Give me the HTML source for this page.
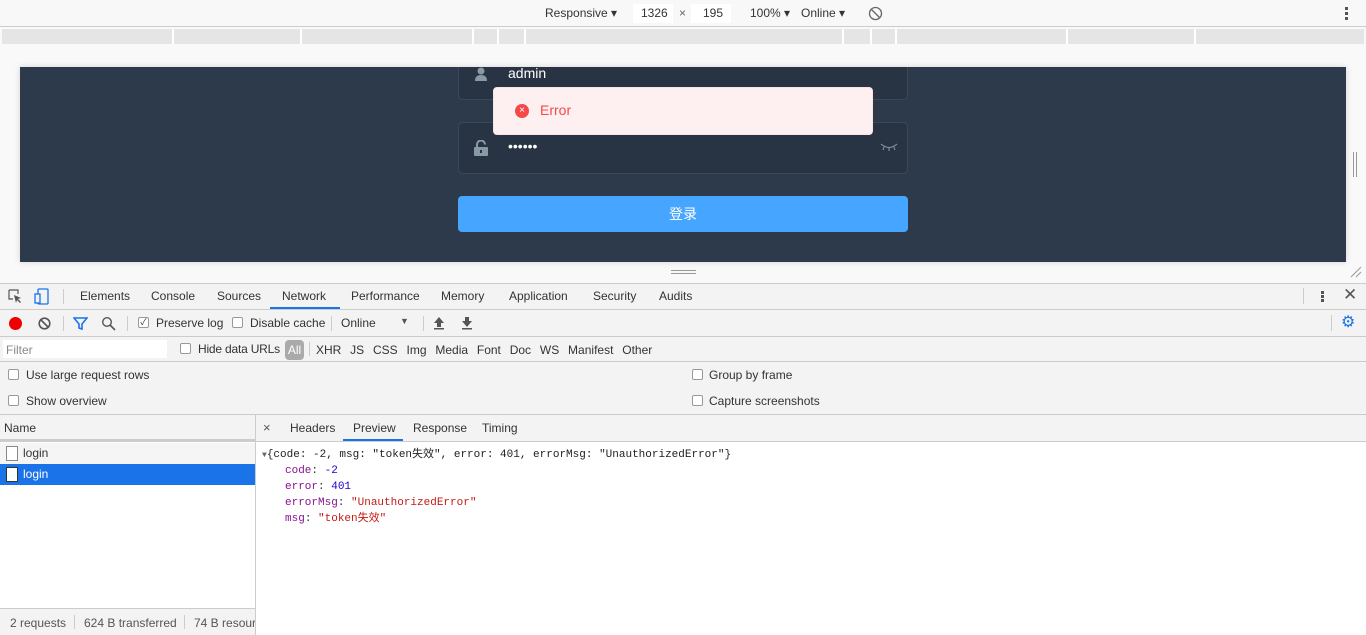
<!DOCTYPE html>
<html><head><meta charset="utf-8"><style>
*{box-sizing:border-box;margin:0;padding:0}
body{width:1366px;height:635px;overflow:hidden;background:#fff;font-family:"Segoe UI","Liberation Sans","Noto Sans CJK SC",sans-serif;font-size:12px;color:#333;position:relative}
.a{position:absolute}
.t{white-space:nowrap}
.cb{position:absolute;width:11px;height:11px;border:1px solid #999;border-radius:2px;background:#fff}
.mono{font-family:"Liberation Mono","Noto Sans CJK SC",monospace;font-size:11px;line-height:14px;height:14px}
</style></head><body>
<div class="a" style="left:0;top:0;width:1366px;height:27px;background:#f8f8f8;border-bottom:1px solid #ccc"></div>
<div class="a t" style="left:545px;top:6px;color:#333">Responsive ▾</div>
<div class="a" style="left:633px;top:4px;width:40px;height:19px;background:#fff"></div>
<div class="a t" style="left:641px;top:6px">1326</div>
<div class="a t" style="left:679px;top:6px;color:#666">×</div>
<div class="a" style="left:691px;top:4px;width:40px;height:19px;background:#fff"></div>
<div class="a t" style="left:703px;top:6px">195</div>
<div class="a t" style="left:750px;top:6px">100% ▾</div>
<div class="a t" style="left:801px;top:6px">Online ▾</div>
<svg class="a" style="left:868px;top:6px" width="15" height="15" viewBox="0 0 15 15"><circle cx="7.5" cy="7.5" r="6" fill="none" stroke="#666" stroke-width="1.3"/><path d="M3.5 3.5L11.5 11.5" stroke="#666" stroke-width="1.3"/></svg>
<div class="a" style="left:1345px;top:7px;width:3px;height:3px;background:#555;box-shadow:0 5px 0 #555,0 10px 0 #555"></div>
<div class="a" style="left:0;top:27px;width:1366px;height:40px;background:#f9f9f9"></div>
<div class="a" style="left:2px;top:29px;width:1362px;height:15px;background:#e5e5e5"></div>
<div class="a" style="left:172px;top:29px;width:2px;height:15px;background:#fff"></div>
<div class="a" style="left:300px;top:29px;width:2px;height:15px;background:#fff"></div>
<div class="a" style="left:472px;top:29px;width:2px;height:15px;background:#fff"></div>
<div class="a" style="left:497px;top:29px;width:2px;height:15px;background:#fff"></div>
<div class="a" style="left:524px;top:29px;width:2px;height:15px;background:#fff"></div>
<div class="a" style="left:842px;top:29px;width:2px;height:15px;background:#fff"></div>
<div class="a" style="left:870px;top:29px;width:2px;height:15px;background:#fff"></div>
<div class="a" style="left:895px;top:29px;width:2px;height:15px;background:#fff"></div>
<div class="a" style="left:1066px;top:29px;width:2px;height:15px;background:#fff"></div>
<div class="a" style="left:1194px;top:29px;width:2px;height:15px;background:#fff"></div>
<div class="a" style="left:0;top:44px;width:1366px;height:239px;background:#f9f9f9"></div>
<div class="a" style="left:20px;top:67px;width:1326px;height:195px;background:#2d3a4b;overflow:hidden;box-shadow:0 0 6px rgba(0,0,0,.15)">
  <div class="a" style="left:438px;top:-10px;width:450px;height:43px;border:1px solid rgba(255,255,255,.1);border-radius:5px;background:#283443"></div>
  <svg class="a" style="left:454px;top:0px" width="14" height="14" viewBox="0 0 14 14"><circle cx="7" cy="4" r="3.5" fill="#889aa4"/><path d="M1 14 Q1 8 7 8 Q13 8 13 14Z" fill="#889aa4"/></svg>
  <div class="a t" style="left:488px;top:-2px;color:#fff;font-size:14px">admin</div>
  <div class="a" style="left:438px;top:55px;width:450px;height:52px;border:1px solid rgba(255,255,255,.1);border-radius:5px;background:#283443"></div>
  <svg class="a" style="left:454px;top:73px" width="14" height="16" viewBox="0 0 14 16"><path d="M3 7V4.5A4 4 0 0 1 11 4.5" fill="none" stroke="#889aa4" stroke-width="2"/><rect x="0" y="7" width="14" height="9" rx="1" fill="#889aa4"/><rect x="6" y="10" width="2" height="3" fill="#283443"/></svg>
  <div class="a t" style="left:488px;top:71px;color:#fff;font-size:14px">••••••</div>
  <svg class="a" style="left:860px;top:76px" width="18" height="8" viewBox="0 0 18 8"><path d="M1 1 Q9 8 17 1 M4 4L3 7 M9 5V8 M14 4L15 7" fill="none" stroke="#889aa4" stroke-width="1"/></svg>
  <div class="a" style="left:438px;top:129px;width:450px;height:36px;background:#46a6ff;border-radius:4px;color:#fff;text-align:center;line-height:36px;font-size:14px">登录</div>
  <div class="a" style="left:473px;top:20px;width:380px;height:48px;background:#fef0f0;border:1px solid #fde2e2;border-radius:4px"></div>
  <div class="a" style="left:495px;top:37px;width:14px;height:14px;border-radius:50%;background:#f54848;color:#fff;font-size:10px;line-height:14px;text-align:center">×</div>
  <div class="a t" style="left:520px;top:35px;color:#f54848;font-size:14px">Error</div>
</div>
<div class="a" style="left:671px;top:270px;width:25px;height:1px;background:#999;box-shadow:0 3px 0 #999"></div>
<div class="a" style="left:1353px;top:152px;width:1px;height:25px;background:#999;box-shadow:3px 0 0 #999"></div>
<svg class="a" style="left:1349px;top:265px" width="13" height="13"><path d="M2 12L12 2M7 12L12 7" stroke="#999" stroke-width="1"/></svg>
<div class="a" style="left:0;top:283px;width:1366px;height:27px;background:#f3f3f3;border-top:1px solid #ccc;border-bottom:1px solid #ccc"></div>
<svg class="a" style="left:8px;top:289px" width="15" height="15"><path d="M1 1H10V5M1 1V10H5" fill="none" stroke="#555" stroke-width="1.2"/><path d="M6 6L13 9L10 10L13 13L12 14L9 11L8 14Z" fill="#555"/></svg>
<svg class="a" style="left:34px;top:288px" width="17" height="17"><rect x="4" y="1" width="10" height="15" rx="1" fill="none" stroke="#1a73e8" stroke-width="1.3"/><rect x="1" y="6" width="5" height="9" fill="#f3f3f3" stroke="#1a73e8" stroke-width="1.3"/></svg>
<div class="a" style="left:63px;top:289px;width:1px;height:15px;background:#ccc"></div>
<div class="a t" style="left:80px;top:289px">Elements</div>
<div class="a t" style="left:151px;top:289px">Console</div>
<div class="a t" style="left:217px;top:289px">Sources</div>
<div class="a t" style="left:282px;top:289px;color:#333">Network</div>
<div class="a" style="left:270px;top:307px;width:70px;height:2px;background:#1a73e8"></div>
<div class="a t" style="left:351px;top:289px">Performance</div>
<div class="a t" style="left:441px;top:289px">Memory</div>
<div class="a t" style="left:509px;top:289px">Application</div>
<div class="a t" style="left:593px;top:289px">Security</div>
<div class="a t" style="left:659px;top:289px">Audits</div>
<div class="a" style="left:1303px;top:288px;width:1px;height:16px;background:#ccc"></div>
<div class="a" style="left:1321px;top:291px;width:3px;height:3px;background:#555;box-shadow:0 4px 0 #555,0 8px 0 #555"></div>
<div class="a t" style="left:1343px;top:285px;font-size:17px;color:#555">✕</div>
<div class="a" style="left:0;top:310px;width:1366px;height:27px;background:#f3f3f3;border-bottom:1px solid #ccc"></div>
<div class="a" style="left:9px;top:317px;width:13px;height:13px;border-radius:50%;background:#e00"></div>
<svg class="a" style="left:38px;top:317px" width="13" height="13"><circle cx="6.5" cy="6.5" r="5.3" fill="none" stroke="#555" stroke-width="1.6"/><path d="M3 3L10 10" stroke="#555" stroke-width="1.6"/></svg>
<div class="a" style="left:63px;top:316px;width:1px;height:15px;background:#ccc"></div>
<svg class="a" style="left:73px;top:317px" width="15" height="13"><path d="M1 1H14L9 7V12L6 11V7Z" fill="none" stroke="#1a73e8" stroke-width="1.6"/></svg>
<svg class="a" style="left:101px;top:316px" width="15" height="15"><circle cx="6" cy="6" r="4.3" fill="none" stroke="#555" stroke-width="1.4"/><path d="M9 9L14 14" stroke="#555" stroke-width="1.6"/></svg>
<div class="a" style="left:127px;top:316px;width:1px;height:15px;background:#ccc"></div>
<div class="cb" style="left:138px;top:317px;font-size:9px;line-height:9px;text-align:center">✓</div>
<div class="a t" style="left:156px;top:316px">Preserve log</div>
<div class="cb" style="left:232px;top:317px"></div>
<div class="a t" style="left:250px;top:316px">Disable cache</div>
<div class="a" style="left:331px;top:316px;width:1px;height:15px;background:#ccc"></div>
<div class="a t" style="left:341px;top:316px">Online</div>
<div class="a t" style="left:400px;top:316px;font-size:9px;color:#555">▼</div>
<div class="a" style="left:423px;top:316px;width:1px;height:15px;background:#ccc"></div>
<svg class="a" style="left:433px;top:316px" width="12" height="14"><path d="M6 1L1 7H4V11H8V7H11Z" fill="#555"/><rect x="1" y="12" width="10" height="1.5" fill="#555"/></svg>
<svg class="a" style="left:461px;top:316px" width="12" height="14"><path d="M6 11L1 5H4V1H8V5H11Z" fill="#555"/><rect x="1" y="12" width="10" height="1.5" fill="#555"/></svg>
<div class="a" style="left:1331px;top:315px;width:1px;height:16px;background:#ccc"></div>
<div class="a t" style="left:1341px;top:312px;color:#1a73e8;font-size:16px">⚙</div>
<div class="a" style="left:0;top:337px;width:1366px;height:25px;background:#f3f3f3;border-bottom:1px solid #ccc"></div>
<div class="a" style="left:3px;top:340px;width:164px;height:18px;background:#fff"></div>
<div class="a t" style="left:6px;top:343px;color:#888">Filter</div>
<div class="cb" style="left:180px;top:343px"></div>
<div class="a t" style="left:198px;top:342px;letter-spacing:-0.2px">Hide data URLs</div>
<div class="a" style="left:285px;top:340px;width:19px;height:20px;border-radius:4px;background:#aaa;color:#fff;text-align:center;line-height:20px">All</div>
<div class="a" style="left:309px;top:342px;width:1px;height:14px;background:#ccc"></div>
<div class="a t" style="left:316px;top:343px;word-spacing:5.5px">XHR JS CSS Img Media Font Doc WS Manifest Other</div>
<div class="a" style="left:0;top:362px;width:1366px;height:53px;background:#f3f3f3;border-bottom:1px solid #ccc"></div>
<div class="cb" style="left:8px;top:369px"></div><div class="a t" style="left:26px;top:368px">Use large request rows</div>
<div class="cb" style="left:8px;top:395px"></div><div class="a t" style="left:26px;top:394px">Show overview</div>
<div class="cb" style="left:692px;top:369px"></div><div class="a t" style="left:709px;top:368px">Group by frame</div>
<div class="cb" style="left:692px;top:395px"></div><div class="a t" style="left:709px;top:394px">Capture screenshots</div>
<div class="a" style="left:0;top:415px;width:256px;height:27px;background:#f3f3f3;border-bottom:3px solid #ccc;border-right:1px solid #ccc"></div>
<div class="a t" style="left:4px;top:421px">Name</div>
<div class="a" style="left:0;top:443px;width:255px;height:21px;background:#f5f5f5"></div>
<div class="a" style="left:6px;top:446px;width:12px;height:15px;border:1px solid #888;background:#fff"></div>
<div class="a t" style="left:23px;top:446px">login</div>
<div class="a" style="left:0;top:464px;width:255px;height:21px;background:#1a73e8"></div>
<div class="a" style="left:6px;top:467px;width:12px;height:15px;border:1px solid #333;background:#fff"></div>
<div class="a t" style="left:23px;top:467px;color:#fff">login</div>
<div class="a" style="left:255px;top:415px;width:1px;height:220px;background:#ccc"></div>
<div class="a" style="left:0;top:608px;width:255px;height:27px;background:#f3f3f3;border-top:1px solid #ccc;overflow:hidden">
  <div class="a t" style="left:10px;top:7px;color:#555">2 requests</div>
  <div class="a" style="left:74px;top:6px;width:1px;height:14px;background:#ccc"></div>
  <div class="a t" style="left:84px;top:7px;color:#555">624 B transferred</div>
  <div class="a" style="left:184px;top:6px;width:1px;height:14px;background:#ccc"></div>
  <div class="a t" style="left:194px;top:7px;color:#555">74 B resources</div>
</div>
<div class="a" style="left:256px;top:415px;width:1110px;height:27px;background:#f3f3f3;border-bottom:1px solid #ccc"></div>
<div class="a t" style="left:263px;top:420px;color:#555;font-size:13px">×</div>
<div class="a t" style="left:290px;top:421px">Headers</div>
<div class="a t" style="left:353px;top:421px">Preview</div>
<div class="a" style="left:343px;top:439px;width:60px;height:2px;background:#1a73e8"></div>
<div class="a t" style="left:413px;top:421px">Response</div>
<div class="a t" style="left:482px;top:421px">Timing</div>
<div class="a t mono" style="left:262px;top:448px;color:#222"><span style="font-size:8px;color:#666">▼</span>{code: -2, msg: "token失效", error: 401, errorMsg: "UnauthorizedError"}</div>
<div class="a t mono" style="left:285px;top:464px"><span style="color:#881391">code</span>: <span style="color:#1c00cf">-2</span></div>
<div class="a t mono" style="left:285px;top:480px"><span style="color:#881391">error</span>: <span style="color:#1c00cf">401</span></div>
<div class="a t mono" style="left:285px;top:496px"><span style="color:#881391">errorMsg</span>: <span style="color:#c41a16">"UnauthorizedError"</span></div>
<div class="a t mono" style="left:285px;top:512px"><span style="color:#881391">msg</span>: <span style="color:#c41a16">"token失效"</span></div>
</body></html>
